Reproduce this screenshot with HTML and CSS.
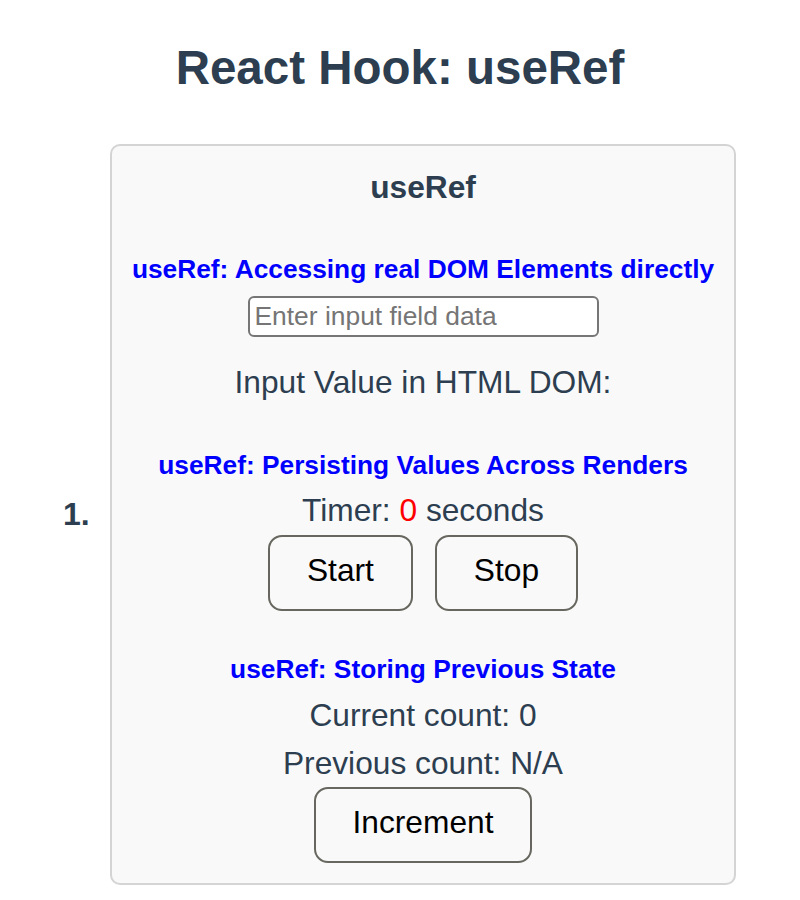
FILE: index.html
```html
<!DOCTYPE html>
<html lang="en">
<head>
<meta charset="utf-8">
<title>React Hook: useRef</title>
<link rel="stylesheet" href="styles.css">
</head>
<body>
<div class="page">
  <h1 class="title">React Hook: useRef</h1>
  <div class="item">
    <span class="marker">1.</span>
    <div class="card">
      <h4 class="card-title">useRef</h4>
      <section class="demo demo-first">
        <h5 class="demo-title">useRef: Accessing real DOM Elements directly</h5>
        <input class="field" type="text" placeholder="Enter input field data">
        <p class="line line-dom">Input Value in HTML DOM: </p>
      </section>
      <section class="demo">
        <h5 class="demo-title">useRef: Persisting Values Across Renders</h5>
        <p class="line">Timer: <span class="count">0</span> seconds</p>
        <div class="actions actions-timer">
          <button class="btn" type="button">Start</button>
          <button class="btn" type="button">Stop</button>
        </div>
      </section>
      <section class="demo demo-last">
        <h5 class="demo-title">useRef: Storing Previous State</h5>
        <p class="line line-tight">Current count: 0</p>
        <p class="line">Previous count: N/A</p>
        <div class="actions">
          <button class="btn" type="button">Increment</button>
        </div>
      </section>
    </div>
  </div>
</div>
</body>
</html>
```

FILE: styles.css
```css
html, body {
  margin: 0;
  padding: 0;
  background: #ffffff;
}

body {
  font-family: "Liberation Sans", Arial, sans-serif;
  color: #2c3e50;
}

.page {
  padding: 0 16px;
}

.title {
  margin: 40px 0 49px;
  font-size: 47.5px;
  font-weight: bold;
  line-height: 55px;
  text-align: center;
  color: #2c3e50;
}

.item {
  display: flex;
  align-items: center;
}

.marker {
  width: 47px;
  margin-left: 47px;
  font-size: 32px;
  font-weight: bold;
  line-height: 48px;
  color: #2c3e50;
}

.card {
  box-sizing: border-box;
  width: 626px;
  padding: 17px 0 20px;
  background: #f9f9f9;
  border: 2px solid #d4d4d4;
  border-radius: 10px;
  text-align: center;
}

.card-title {
  margin: 0;
  font-size: 31.7px;
  font-weight: bold;
  line-height: 48px;
}

.demo {
  margin-top: 40px;
}

.demo-first {
  margin-top: 39px;
}

.demo-last {
  margin-top: 39px;
}

.demo-title {
  margin: 0;
  font-size: 26.3px;
  font-weight: bold;
  line-height: 39.84px;
  color: #0000ff;
  white-space: nowrap;
}

.field {
  display: block;
  box-sizing: border-box;
  width: 351px;
  height: 41px;
  margin: 6px auto 0;
  padding: 2px 5px;
  font-family: "Liberation Sans", Arial, sans-serif;
  font-size: 26.4px;
  color: #000000;
  background: #ffffff;
  border: 2px solid #767676;
  border-radius: 6px;
}

.field::placeholder {
  color: #757575;
}

.line {
  margin: 0;
  font-size: 31.7px;
  line-height: 48px;
}

.line-dom {
  margin-top: 21px;
}

.line-tight {
  margin-top: 1px;
}

.count {
  color: #ff0000;
}

.actions {
  display: flex;
  justify-content: center;
  gap: 22px;
}

.actions-timer {
  margin-top: 1px;
}

.btn {
  box-sizing: border-box;
  height: 76px;
  padding: 0 37px 5px;
  font-family: "Liberation Sans", Arial, sans-serif;
  font-size: 31.7px;
  line-height: 36px;
  color: #000000;
  background: transparent;
  border: 2px solid #67675f;
  border-radius: 14px;
}
```
